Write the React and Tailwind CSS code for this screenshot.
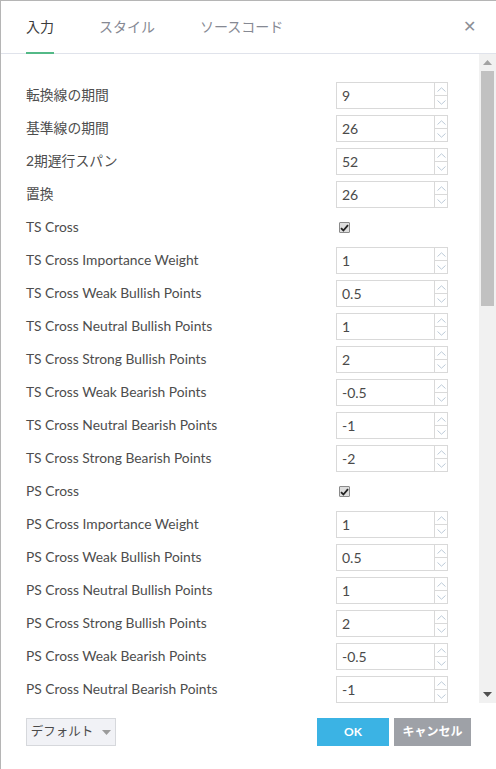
import React from 'react';

const rows = [
  { label: '転換線の期間', value: '9' },
  { label: '基準線の期間', value: '26' },
  { label: '2期遅行スパン', value: '52' },
  { label: '置換', value: '26' },
  { label: 'TS Cross', check: true },
  { label: 'TS Cross Importance Weight', value: '1' },
  { label: 'TS Cross Weak Bullish Points', value: '0.5' },
  { label: 'TS Cross Neutral Bullish Points', value: '1' },
  { label: 'TS Cross Strong Bullish Points', value: '2' },
  { label: 'TS Cross Weak Bearish Points', value: '-0.5' },
  { label: 'TS Cross Neutral Bearish Points', value: '-1' },
  { label: 'TS Cross Strong Bearish Points', value: '-2' },
  { label: 'PS Cross', check: true },
  { label: 'PS Cross Importance Weight', value: '1' },
  { label: 'PS Cross Weak Bullish Points', value: '0.5' },
  { label: 'PS Cross Neutral Bullish Points', value: '1' },
  { label: 'PS Cross Strong Bullish Points', value: '2' },
  { label: 'PS Cross Weak Bearish Points', value: '-0.5' },
  { label: 'PS Cross Neutral Bearish Points', value: '-1' },
];

function Chevron({ up }) {
  return (
    <svg width="9" height="5" viewBox="0 0 9 5" fill="none">
      <path
        d={up ? 'M0.5 4.5 L4.5 0.8 L8.5 4.5' : 'M0.5 0.5 L4.5 4.2 L8.5 0.5'}
        stroke="#bccad8"
        strokeWidth="1"
      />
    </svg>
  );
}

function NumberInput({ value }) {
  return (
    <div className="flex h-[27px] w-[112px] border border-[#d9d9d9] bg-white">
      <div className="flex flex-1 items-center pl-[5px] text-[14px] text-[#4a4a4a]">{value}</div>
      <div className="flex w-[13px] flex-col border-l border-[#d9d9d9]">
        <div className="flex flex-1 items-center justify-center border-b border-[#d9d9d9]">
          <Chevron up />
        </div>
        <div className="flex flex-1 items-center justify-center">
          <Chevron />
        </div>
      </div>
    </div>
  );
}

function Checkbox() {
  return (
    <div className="flex h-[27px] items-center pl-[3px]">
      <div className="flex h-[11px] w-[11px] items-center justify-center rounded-[1px] border border-[#8a8a8a] bg-[#dedede]">
        <svg width="9" height="8" viewBox="0 0 9 8">
          <path d="M1 4.2 L3.4 6.5 L8 1.2" stroke="#222" strokeWidth="1.8" fill="none" />
        </svg>
      </div>
    </div>
  );
}

export default function App() {
  return (
    <div
      className="flex h-[769px] w-[496px] flex-col overflow-hidden border-l border-t border-[#b5b5b5] bg-white"
      style={{ fontFamily: 'Lato, "Noto Sans CJK JP", sans-serif' }}
    >
      {/* Tabs */}
      <div className="flex h-[53px] shrink-0 items-stretch border-b border-[#e0e3eb] pl-[25px] pr-[20px]">
        <div className="relative flex items-center pb-[2px] text-[14px] text-[#3c3c3c]">
          入力
          <span className="absolute bottom-[-1px] left-0 right-0 h-[2px] bg-[#53b987]" />
        </div>
        <div className="ml-[45px] flex items-center pb-[2px] text-[14px] text-[#868993]">スタイル</div>
        <div className="ml-[45px] flex items-center pb-[2px] text-[14px] text-[#868993]">ソースコード</div>
        <div className="ml-auto flex items-center pb-[3px] text-[16px] text-[#8b8e96]">✕</div>
      </div>

      {/* Scroll area */}
      <div className="flex h-[649px] shrink-0">
        <div className="flex flex-1 flex-col gap-[6px] overflow-hidden pl-[25px] pt-[28px]">
          {rows.map((r) => (
            <div key={r.label} className="flex shrink-0 items-center">
              <div className="w-[310px] text-[13.8px] text-[#4d4d4d]">{r.label}</div>
              {r.check ? <Checkbox /> : <NumberInput value={r.value} />}
            </div>
          ))}
        </div>
        <div className="flex w-[17px] flex-col items-center bg-[#f1f1f1] pt-[6px] pb-[6px]">
          <svg width="9" height="5" viewBox="0 0 9 5">
            <path d="M0 5 L4.5 0 L9 5 Z" fill="#a3a3a3" />
          </svg>
          <div className="mt-[6px] h-[235px] w-[13px] bg-[#c1c1c1]" />
          <div className="flex-1" />
          <svg width="9" height="5" viewBox="0 0 9 5">
            <path d="M0 0 L4.5 5 L9 0 Z" fill="#505050" />
          </svg>
        </div>
      </div>

      {/* Footer */}
      <div className="flex items-start pl-[25px] pr-[25px] pt-[15px]">
        <button className="flex h-[28px] w-[90px] items-center justify-center gap-[9px] border border-[#d6d8dc] bg-[#f1f2f6] text-[12.5px] leading-none text-[#4a4a4a]">
          デフォルト
          <svg width="9" height="5" viewBox="0 0 9 5">
            <path d="M0 0 L4.5 5 L9 0 Z" fill="#9b9b9b" />
          </svg>
        </button>
        <button className="ml-auto flex h-[28px] w-[72px] items-center justify-center bg-[#3bb3e4] text-[12px] font-bold leading-none text-white">
          OK
        </button>
        <button className="ml-[5px] flex h-[28px] w-[77px] items-center justify-center bg-[#9ea1a7] text-[12px] font-bold leading-none text-white">
          キャンセル
        </button>
      </div>
    </div>
  );
}
